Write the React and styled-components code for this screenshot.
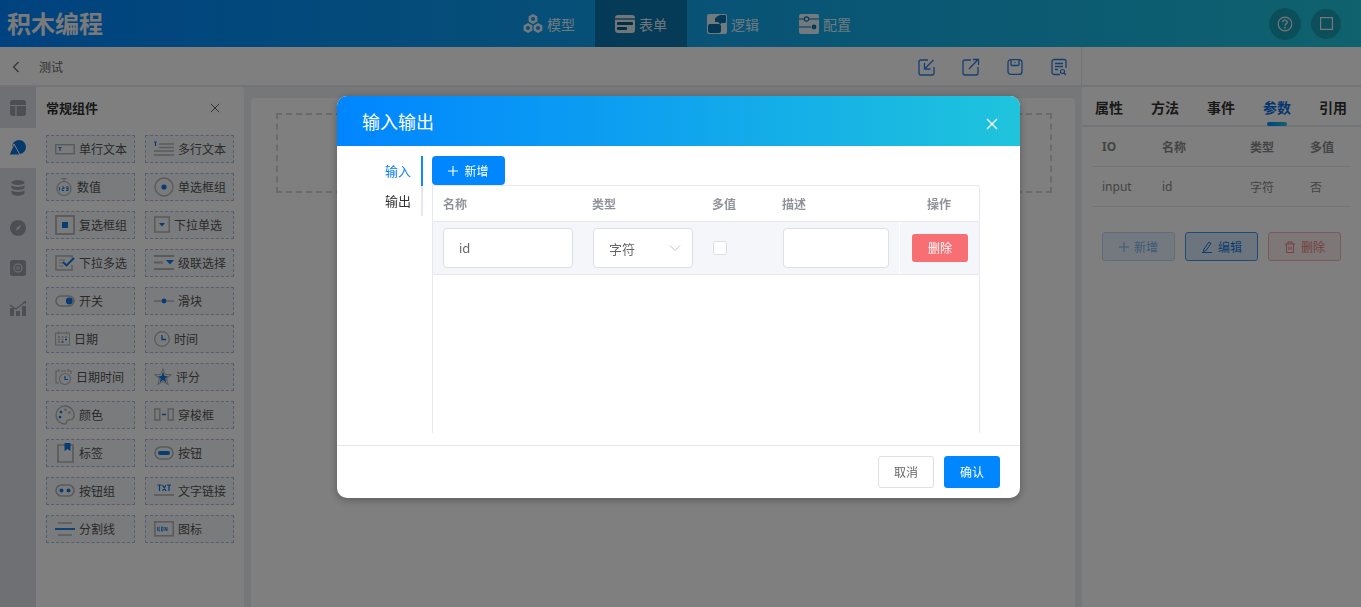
import React from "react";
import styled, { createGlobalStyle } from "styled-components";

const GlobalStyle = createGlobalStyle`
  html, body { margin: 0; padding: 0; height: 100%; overflow: hidden; }
  body { font-family: "Noto Sans", "Noto Sans CJK SC", sans-serif; font-size: 13px; color: #333; }
  * { box-sizing: border-box; }
`;

const BLUE = "#0a78e6";
const GREY = "#b4b4b4";

const Page = styled.div`
  height: 100vh;
  display: flex;
  flex-direction: column;
  background: #eceef3;
`;

const Header = styled.header`
  height: 47px;
  flex: none;
  display: grid;
  grid-template-columns: 503px 368px 1fr;
  background: linear-gradient(90deg, #0085ff, #1fc4dc);
  color: #fff;
`;
const Logo = styled.div`
  padding-left: 7px;
  line-height: 47px;
  font-size: 24px;
  font-weight: 700;
  color: #f4f4f4;
`;
const Nav = styled.nav`
  display: flex;
`;
const NavItem = styled.div`
  width: 92px;
  display: flex;
  align-items: center;
  justify-content: center;
  gap: 4px;
  font-size: 14px;
  color: #ffffffe0;
  background: ${(p) => (p.$active ? "rgba(0,0,0,.27)" : "transparent")};
`;
const HeaderRight = styled.div`
  display: flex;
  justify-content: flex-end;
  align-items: center;
  gap: 10px;
  padding-right: 20px;
`;
const Round = styled.div`
  width: ${(p) => p.$size}px;
  height: ${(p) => p.$size}px;
  border-radius: 50%;
  background: rgba(0, 0, 0, 0.18);
  display: flex;
  align-items: center;
  justify-content: center;
`;

const Toolbar = styled.div`
  height: 40px;
  flex: none;
  display: flex;
  background: #fff;
  border-bottom: 2px solid #e6e8ee;
`;
const ToolLeft = styled.div`
  width: 1082px;
  display: flex;
  align-items: center;
  padding: 2px 0 0 11px;
  border-right: 1px solid #e6e8ee;
  font-size: 12px;
  color: #666;
`;
const BackTitle = styled.span`
  margin-left: 18px;
`;
const ToolIcons = styled.div`
  margin-left: auto;
  display: flex;
  gap: 26px;
  padding-right: 13px;
`;

const Body = styled.div`
  flex: 1;
  display: flex;
  min-height: 0;
`;
const Rail = styled.div`
  width: 36px;
  flex: none;
  padding-top: 1px;
  background: #dfe1e8;
`;
const RailItem = styled.div`
  height: 40px;
  display: flex;
  align-items: center;
  justify-content: center;
  background: ${(p) => (p.$active ? "#fff" : "transparent")};
`;
const Panel = styled.div`
  width: 208px;
  flex: none;
  background: #fff;
  border-radius: 0 4px 0 0;
`;
const PanelHead = styled.div`
  height: 48px;
  display: flex;
  align-items: center;
  justify-content: space-between;
  padding: 0 24px 7px 10px;
  font-size: 13px;
  font-weight: 700;
  color: #333;
`;
const PaletteGrid = styled.div`
  display: grid;
  grid-template-columns: 89px 89px;
  grid-auto-rows: 28px;
  gap: 10px;
  padding-left: 10px;
`;
const PaletteItem = styled.div`
  display: flex;
  align-items: center;
  gap: 4px;
  padding-left: 8px;
  border: 1px dashed #a9bcdc;
  background: #f5f6fa;
  font-size: 12px;
  color: #555;
  white-space: nowrap;
`;

const CanvasWrap = styled.div`
  flex: 1;
  padding: 11px 7px 0;
`;
const CanvasCard = styled.div`
  height: 100%;
  background: #fff;
  border-radius: 4px 4px 0 0;
  padding: 15px 23px 0 25px;
`;
const DropZone = styled.div`
  height: 80px;
  border: 2px dashed #d4d4d4;
`;

const RightPanel = styled.aside`
  width: 279px;
  flex: none;
  background: #fff;
`;
const RightTabs = styled.div`
  height: 40px;
  display: flex;
  gap: 28px;
  padding: 9px 0 0 13px;
  border-bottom: 2px solid #e6e8ee;
`;
const RightTab = styled.div`
  position: relative;
  height: 29px;
  font-size: 14px;
  font-weight: 700;
  line-height: 23px;
  color: ${(p) => (p.$active ? "#0a6fe0" : "#333")};
  &::after {
    content: "";
    display: ${(p) => (p.$active ? "block" : "none")};
    position: absolute;
    left: 4px;
    bottom: -1px;
    width: 20px;
    height: 4px;
    border-radius: 2px;
    background: linear-gradient(90deg, #0085ff, #1fc4dc);
  }
`;
const ParamTable = styled.div`
  margin: 0 11px 0 10px;
  font-size: 12px;
  color: #888;
`;
const ParamRow = styled.div`
  height: 40px;
  display: grid;
  grid-template-columns: 60px 88px 60px 1fr;
  align-items: center;
  padding-left: 10px;
  border-bottom: 1px solid #e8eaf0;
  font-weight: ${(p) => (p.$head ? 700 : 400)};
`;
const ParamActions = styled.div`
  display: flex;
  gap: 10px;
  padding: 25px 0 0 10px;
`;
const ParamButton = styled.div`
  width: 73px;
  height: 29px;
  border-radius: 3px;
  display: flex;
  align-items: center;
  justify-content: center;
  gap: 5px;
  font-size: 12px;
  border: 1px solid ${(p) => p.$line};
  background: ${(p) => p.$bg};
  color: ${(p) => p.$color};
`;

const Overlay = styled.div`
  position: fixed;
  inset: 0;
  background: rgba(0, 0, 0, 0.5);
  padding: 96px 0 0 337px;
`;
const Dialog = styled.div`
  width: 683px;
  height: 402px;
  background: #fff;
  border-radius: 10px;
  overflow: hidden;
  display: flex;
  flex-direction: column;
  box-shadow: 0 2px 8px rgba(0, 0, 0, 0.3);
`;
const DialogHead = styled.div`
  height: 50px;
  flex: none;
  display: flex;
  align-items: center;
  justify-content: space-between;
  padding: 0 22px 0 25px;
  background: linear-gradient(90deg, #0085ff, #1fc4dc);
  color: #fff;
  font-size: 18px;
`;
const CloseIcon = styled.span`
  display: flex;
  margin-top: 6px;
`;
const DialogBody = styled.div`
  flex: 1;
  display: flex;
  padding: 10px 40px 12px 0;
  border-bottom: 1px solid #e4e6ef;
`;
const SideTabs = styled.div`
  width: 86px;
  flex: none;
  margin-right: 9px;
  align-self: flex-start;
  border-right: 2px solid #e4e6ef;
`;
const SideTab = styled.div`
  position: relative;
  height: 30px;
  line-height: 30px;
  padding-left: 48px;
  font-size: 13px;
  margin-right: -2px;
  border-right: 2px solid ${(p) => (p.$active ? "#0a8cff" : "transparent")};
  color: ${(p) => (p.$active ? "#0a7cff" : "#333")};
`;
const DialogMain = styled.div`
  flex: 1;
  display: flex;
  flex-direction: column;
  align-items: flex-start;
`;
const AddButton = styled.div`
  width: 73px;
  height: 29px;
  flex: none;
  display: flex;
  align-items: center;
  justify-content: center;
  gap: 6px;
  border-radius: 4px;
  background: #0087ff;
  color: #fff;
  font-size: 12px;
`;
const IoTable = styled.div`
  flex: 1;
  width: 100%;
  border: 1px solid #e8e9f0;
  border-bottom: none;
  border-radius: 0 4px 0 0;
`;
const IoHead = styled.div`
  height: 35px;
  display: grid;
  grid-template-columns: 149px 120px 70px 144px 1fr;
  align-items: center;
  padding-left: 10px;
  font-size: 12px;
  font-weight: 700;
  color: #909399;
`;
const HeadAction = styled.span`
  padding-left: 1px;
`;
const IoRow = styled.div`
  height: 54px;
  display: flex;
  align-items: center;
  padding-left: 10px;
  background: #f5f6fa;
  border-top: 1px solid #e8e9f0;
  border-bottom: 1px solid #e8e9f0;
`;
const Field = styled.div`
  width: ${(p) => p.$w}px;
  height: 40px;
  flex: none;
  margin-right: ${(p) => p.$mr || 0}px;
  display: flex;
  align-items: center;
  justify-content: space-between;
  padding: 0 11px 0 15px;
  background: #fff;
  border: 1px solid #dcdfe6;
  border-radius: 4px;
  font-size: 13px;
  color: #666;
`;
const Check = styled.div`
  width: 14px;
  height: 14px;
  flex: none;
  margin-right: 56px;
  background: #fff;
  border: 1px solid #dcdfe6;
  border-radius: 2px;
`;
const ActionCell = styled.div`
  align-self: stretch;
  margin-left: 10px;
  padding-left: 12px;
  display: flex;
  align-items: center;
  border-left: 1px solid #fff;
`;
const DeleteButton = styled.div`
  width: 56px;
  height: 28px;
  display: flex;
  align-items: center;
  justify-content: center;
  border-radius: 3px;
  background: #f76f72;
  color: #fff;
  font-size: 12px;
`;
const DialogFoot = styled.div`
  height: 52px;
  flex: none;
  display: flex;
  align-items: center;
  justify-content: flex-end;
  gap: 10px;
  padding: 0 20px 0 0;
`;
const FootButton = styled.div`
  width: 56px;
  height: 32px;
  display: flex;
  align-items: center;
  justify-content: center;
  border-radius: 3px;
  font-size: 12px;
  border: 1px solid ${(p) => (p.$primary ? "#0087ff" : "#dcdfe6")};
  background: ${(p) => (p.$primary ? "#0087ff" : "#fff")};
  color: ${(p) => (p.$primary ? "#fff" : "#666")};
`;

const Svg = ({ w = 20, h = 20, vb = "0 0 20 20", children, ...rest }) => (
  <svg width={w} height={h} viewBox={vb} fill="none" style={{ flex: "none" }} {...rest}>
    {children}
  </svg>
);

const Cross = ({ size = 12, color = "#fff", sw = 1.4 }) => (
  <Svg w={size} h={size} vb="0 0 12 12">
    <path d="M1 1l10 10M11 1L1 11" stroke={color} strokeWidth={sw} />
  </Svg>
);
const Plus = ({ color = "#fff", size = 10 }) => (
  <Svg w={size} h={size} vb="0 0 10 10">
    <path d="M5 0v10M0 5h10" stroke={color} strokeWidth="1.1" />
  </Svg>
);

const navHex = "#ffffffe0";
const navIcons = {
  model: (
    <Svg>
      {[[10, 5], [5, 14], [15, 14]].map(([x, y]) => (
        <path
          key={x + "-" + y}
          fillRule="evenodd"
          fill={navHex}
          d={`M${x} ${y - 5}l4.4 2.5v5L${x} ${y + 5}l-4.4-2.5v-5zM${x} ${y - 2}a2 2 0 100 4 2 2 0 000-4z`}
        />
      ))}
    </Svg>
  ),
  form: (
    <Svg>
      <rect y="1" width="20" height="18" rx="3" fill={navHex} />
      <path d="M0 5h20" stroke="#075a86" strokeWidth="1.2" />
      <rect x="2" y="8" width="16" height="3" rx="1" fill="#075a86" />
      <rect x="2" y="13" width="10" height="3" rx="1" fill="#075a86" />
    </Svg>
  ),
  logic: (
    <Svg>
      <rect y="0" width="20" height="20" rx="2" fill={navHex} />
      <rect x="1" y="10" width="13" height="9" rx="2" fill="#0a70a8" />
      <path d="M10 2.500l3-1.500h5a1 1 0 011 1v6a1 1 0 01-1 1h-3l-2 1-2-2H8V4.500z" fill="#0a70a8" />
    </Svg>
  ),
  config: (
    <Svg>
      <rect y="0" width="20" height="20" rx="2" fill={navHex} />
      <path d="M0 5h5M10 5h10M0 13h12" stroke="#0a70a8" strokeWidth="1.2" />
      <circle cx="7.5" cy="5" r="2.2" stroke="#0a70a8" strokeWidth="1.2" />
      <circle cx="15" cy="13" r="2.4" fill="#0a70a8" />
    </Svg>
  ),
};

const paletteIcons = {
  input: (
    <>
      <rect x="0.7" y="5.700" width="18.600" height="9" stroke={GREY} strokeWidth="1.400" />
      <path d="M3.500 8.500h3M5 8.500v3.500" stroke={BLUE} strokeWidth="1" />
    </>
  ),
  textarea: (
    <>
      <path d="M0 3h3M1.500 3v4" stroke={BLUE} strokeWidth="1.200" />
      <path d="M5 5h15M5 8.500h15M0 12h20M0 16h20" stroke={GREY} strokeWidth="1.600" />
    </>
  ),
  number: (
    <>
      <circle cx="9" cy="11.500" r="7" stroke={GREY} strokeWidth="1.200" />
      <path d="M6 1.500h6M9 1.500v3" stroke={GREY} strokeWidth="1.200" />
      <path d="M4.500 10v3.500M7 10h2v1.700H7v1.800h2M11 10h2.200v3.500H11M11 11.700h2" stroke={BLUE} strokeWidth=".9" />
    </>
  ),
  radio: (
    <>
      <circle cx="10" cy="10" r="9" stroke={GREY} strokeWidth="1.400" />
      <circle cx="10" cy="10" r="2.600" fill={BLUE} />
    </>
  ),
  checkbox: (
    <>
      <rect x="1" y="1" width="18" height="18" stroke={GREY} strokeWidth="1.800" />
      <rect x="7" y="7" width="6" height="6" fill={BLUE} />
    </>
  ),
  selectOne: (
    <>
      <rect x=".8" y="2" width="14.500" height="15" stroke={GREY} strokeWidth="1.500" />
      <path d="M5 8h6l-3 3.500z" fill={BLUE} />
    </>
  ),
  selectMany: (
    <>
      <path d="M17 5V3H1v14h16v-5" stroke={GREY} strokeWidth="1.500" />
      <path d="M4 7h6M4 10h4M4 13h4" stroke={GREY} strokeWidth="1.200" />
      <path d="M8 9l3.500 3.500L19 5" stroke={BLUE} strokeWidth="1.800" />
    </>
  ),
  cascade: (
    <>
      <path d="M0 3h20M0 9.500h9M0 16h20" stroke={GREY} strokeWidth="1.800" />
      <path d="M12 7h8l-4 4.500z" fill={BLUE} />
    </>
  ),
  toggle: (
    <>
      <rect x="1" y="5" width="18" height="10" rx="5" stroke={GREY} strokeWidth="1.600" />
      <circle cx="14.300" cy="10" r="3.400" fill={BLUE} />
    </>
  ),
  slider: (
    <>
      <path d="M0 10h20" stroke={GREY} strokeWidth="1.400" />
      <circle cx="10" cy="10" r="2.400" fill={BLUE} />
    </>
  ),
  date: (
    <>
      <rect x=".6" y="4" width="14" height="12" stroke={GREY} strokeWidth="1.100" />
      <path d="M3.500 2.500v3M11.500 2.500v3" stroke={GREY} strokeWidth="1.100" />
      <path d="M3 8h2M6.500 8h2M10 8h2M3 10.500h2M6.500 10.500h2M3 13h2" stroke={GREY} strokeWidth="1.400" />
      <path d="M10 10.500h2M6.500 13h2" stroke={BLUE} strokeWidth="1.400" />
    </>
  ),
  time: (
    <>
      <circle cx="8" cy="10" r="7.300" stroke={GREY} strokeWidth="1.300" />
      <path d="M8 6v4.500h4" stroke={BLUE} strokeWidth="1.300" />
    </>
  ),
  dateTime: (
    <>
      <path d="M4 4H1v12h3M13 4h3v3" stroke={GREY} strokeWidth="1.100" />
      <path d="M4 2v3M13 2v3M6 4h5" stroke={GREY} strokeWidth="1.100" />
      <circle cx="10" cy="12" r="5.500" stroke={GREY} strokeWidth="1.100" />
      <path d="M10 9v3.500h3" stroke={BLUE} strokeWidth="1.100" />
    </>
  ),
  star: (
    <>
      <path d="M9 2l2.200 5.400 5.800.4-4.400 3.800 1.400 5.700L9 14.300 4 17.300l1.400-5.700L1 7.800l5.800-.4z" stroke={GREY} strokeWidth="1.100" />
      <path d="M9 5l1.500 4 3.500.3-2.700 2.300.9 3.600L9 13z" fill={BLUE} />
      <path d="M9 5L7.500 9 4 9.300l2.700 2.300-.9 3.600L9 13z" fill={BLUE} />
    </>
  ),
  palette: (
    <>
      <path d="M10 1a9 9 0 100 18c2 0 1-2 2-3.500s6 1 7-4C19.800 6 15.500 1 10 1z" stroke={GREY} strokeWidth="1.300" />
      <circle cx="6" cy="7" r="1.300" fill={BLUE} />
      <circle cx="10.500" cy="4.800" r="1.300" fill={GREY} />
      <circle cx="14.500" cy="7.500" r="1.300" fill={GREY} />
      <circle cx="5" cy="12" r="1.300" fill={BLUE} />
    </>
  ),
  transfer: (
    <>
      <rect x=".8" y="4" width="5" height="11" stroke={GREY} strokeWidth="1.500" />
      <rect x="14.200" y="4" width="5" height="11" stroke={GREY} strokeWidth="1.500" />
      <path d="M8 9.500h4" stroke={BLUE} strokeWidth="1.500" />
    </>
  ),
  tag: (
    <>
      <path d="M3 2v17h15V2z" stroke={GREY} strokeWidth="1.700" />
      <path d="M9.500 0h6v8l-3-2-3 2z" fill={BLUE} />
    </>
  ),
  button: (
    <>
      <rect x="1" y="4" width="18" height="12" rx="6" stroke={GREY} strokeWidth="1.600" />
      <rect x="4" y="8" width="12" height="4" rx="2" fill={BLUE} />
    </>
  ),
  buttons: (
    <>
      <rect x="1" y="4" width="18" height="11" rx="5.500" stroke={GREY} strokeWidth="1.600" />
      <circle cx="6.500" cy="9.500" r="2" fill={BLUE} />
      <circle cx="13.500" cy="9.500" r="2" fill={BLUE} />
    </>
  ),
  link: (
    <>
      <path d="M3.500 4h4M5.500 4v6M8.500 4l3.500 6M12 4l-3.500 6M13 4h4M15 4v6" stroke={BLUE} strokeWidth="1.200" />
      <path d="M0 14h20" stroke={GREY} strokeWidth="1.600" />
    </>
  ),
  divider: (
    <>
      <path d="M3 4h14M3 16h14" stroke={GREY} strokeWidth="1.600" />
      <path d="M0 10h20" stroke={BLUE} strokeWidth="1.800" />
    </>
  ),
  iconBox: (
    <>
      <rect x=".8" y="2.800" width="18.400" height="14" stroke={GREY} strokeWidth="1.600" />
      <path d="M3.500 8v4M5.800 8H5v4h1M7.500 8h1.500v4H7.500zM11 12V8l2 4V8" stroke={BLUE} strokeWidth=".8" />
    </>
  ),
};

const palette = [
  ["input", "单行文本"],
  ["textarea", "多行文本"],
  ["number", "数值", 18],
  ["radio", "单选框组"],
  ["checkbox", "复选框组"],
  ["selectOne", "下拉单选", 16],
  ["selectMany", "下拉多选"],
  ["cascade", "级联选择"],
  ["toggle", "开关"],
  ["slider", "滑块"],
  ["date", "日期", 15],
  ["time", "时间", 16],
  ["dateTime", "日期时间", 17],
  ["star", "评分", 18],
  ["palette", "颜色"],
  ["transfer", "穿梭框"],
  ["tag", "标签"],
  ["button", "按钮"],
  ["buttons", "按钮组"],
  ["link", "文字链接"],
  ["divider", "分割线"],
  ["iconBox", "图标"],
];

const railIcons = [
  <Svg key="0">
    <rect x="2" y="2" width="16" height="16" rx="3" fill="#9a9ca6" />
    <path d="M2 7.500h16M8 7.500V18" stroke="#dfe1e8" strokeWidth="1.200" />
  </Svg>,
  <Svg key="1">
    <circle cx="11" cy="9" r="7" fill="#0a72d8" />
    <path d="M6 6l6 11H1z" fill="#0a72d8" stroke="#fff" strokeWidth="1" />
  </Svg>,
  <Svg key="2">
    <ellipse cx="10" cy="4.500" rx="6.500" ry="2.500" fill="#9a9ca6" />
    <path d="M3.500 7c1 2.500 12 2.500 13 0v3c-1 2.500-12 2.500-13 0zM3.500 12c1 2.500 12 2.500 13 0v3c-1 3.500-12 3.500-13 0z" fill="#9a9ca6" />
  </Svg>,
  <Svg key="3">
    <circle cx="10" cy="10" r="8" fill="#9a9ca6" />
    <path d="M13.500 6.500L11 11l-3 1.500 1-3z" fill="#dfe1e8" />
  </Svg>,
  <Svg key="4">
    <rect x="2" y="2" width="16" height="16" rx="2.500" fill="#9a9ca6" />
    <circle cx="10" cy="10" r="4" stroke="#dfe1e8" strokeWidth="1.100" />
    <circle cx="10" cy="10" r="1.300" stroke="#dfe1e8" strokeWidth=".8" />
  </Svg>,
  <Svg key="5">
    <path d="M2 10h4v8H2zM8 13h4v5H8zM14 8h4v10h-4z" fill="#9a9ca6" />
    <path d="M2 7l6 4 9-7" stroke="#9a9ca6" strokeWidth="1.300" />
    <path d="M18 2.500V6l-3.500-1.500z" fill="#9a9ca6" />
  </Svg>,
];

const toolIcons = [
  <Svg key="a" w={18} h={18} vb="0 0 18 18">
    <path d="M10 2H3a2 2 0 00-2 2v11a2 2 0 002 2h11a2 2 0 002-2V9" stroke="#2a7fe0" strokeWidth="1.300" />
    <path d="M15.500 2L7.500 10M6.500 5v6h6" stroke="#2a7fe0" strokeWidth="1.300" />
  </Svg>,
  <Svg key="b" w={18} h={18} vb="0 0 18 18">
    <path d="M9 2H3a2 2 0 00-2 2v11a2 2 0 002 2h11a2 2 0 002-2V9" stroke="#2a7fe0" strokeWidth="1.300" />
    <path d="M7 11l9-9.500M11 1.500h5.500V7" stroke="#2a7fe0" strokeWidth="1.300" />
  </Svg>,
  <Svg key="c" w={18} h={18} vb="0 0 18 18">
    <rect x="2" y="1.600" width="14" height="14.800" rx="3" stroke="#2a7fe0" strokeWidth="1.300" />
    <path d="M5 2v4.500a1 1 0 001 1h6a1 1 0 001-1V2" stroke="#2a7fe0" strokeWidth="1.300" />
    <path d="M9 4v1" stroke="#2a7fe0" strokeWidth="1.300" />
  </Svg>,
  <Svg key="d" w={18} h={18} vb="0 0 18 18">
    <path d="M10 16.500H4a2 2 0 01-2-2v-11a2 2 0 012-2h10a2 2 0 012 2V10" stroke="#2a7fe0" strokeWidth="1.300" />
    <path d="M5 5.500h8M5 8.500h8M5 11.500h3" stroke="#2a7fe0" strokeWidth="1.300" />
    <circle cx="12.500" cy="13.500" r="2" stroke="#2a7fe0" strokeWidth="1.200" />
    <path d="M14 15l2 2" stroke="#2a7fe0" strokeWidth="1.200" />
  </Svg>,
];

export default function App() {
  return (
    <Page>
      <GlobalStyle />
      <Header>
        <Logo>积木编程</Logo>
        <Nav>
          <NavItem>{navIcons.model}模型</NavItem>
          <NavItem $active>{navIcons.form}表单</NavItem>
          <NavItem>{navIcons.logic}逻辑</NavItem>
          <NavItem>{navIcons.config}配置</NavItem>
        </Nav>
        <HeaderRight>
          <Round $size={32}>
            <Svg w={16} h={16} vb="0 0 16 16">
              <circle cx="8" cy="8" r="6.800" stroke="#eee" strokeWidth="1.200" />
              <path d="M5.800 6.200a2.200 2.200 0 114 1.200c-.6.800-1.800 1-1.800 2.300" stroke="#eee" strokeWidth="1.300" />
              <circle cx="8" cy="11.700" r=".9" fill="#eee" />
            </Svg>
          </Round>
          <Round $size={30}>
            <Svg w={13} h={13} vb="0 0 13 13">
              <rect x=".6" y=".6" width="11.800" height="11.800" stroke="#eee" strokeWidth="1.200" />
            </Svg>
          </Round>
        </HeaderRight>
      </Header>

      <Toolbar>
        <ToolLeft>
          <Svg w={10} h={12} vb="0 0 10 12">
            <path d="M7.500 1L2.500 6l5 5" stroke="#666" strokeWidth="1.200" />
          </Svg>
          <BackTitle>测试</BackTitle>
          <ToolIcons>{toolIcons}</ToolIcons>
        </ToolLeft>
      </Toolbar>

      <Body>
        <Rail>
          {railIcons.map((icon, i) => (
            <RailItem key={i} $active={i === 1}>
              {icon}
            </RailItem>
          ))}
        </Rail>
        <Panel>
          <PanelHead>
            常规组件
            <Cross size={10} color="#555" sw={1.1} />
          </PanelHead>
          <PaletteGrid>
            {palette.map(([icon, label, w = 20]) => (
              <PaletteItem key={label}>
                <Svg w={w} h={20} vb={`0 0 ${w} 20`}>
                  {paletteIcons[icon]}
                </Svg>
                {label}
              </PaletteItem>
            ))}
          </PaletteGrid>
        </Panel>
        <CanvasWrap>
          <CanvasCard>
            <DropZone />
          </CanvasCard>
        </CanvasWrap>
        <RightPanel>
          <RightTabs>
            <RightTab>属性</RightTab>
            <RightTab>方法</RightTab>
            <RightTab>事件</RightTab>
            <RightTab $active>参数</RightTab>
            <RightTab>引用</RightTab>
          </RightTabs>
          <ParamTable>
            <ParamRow $head>
              <span>IO</span>
              <span>名称</span>
              <span>类型</span>
              <span>多值</span>
            </ParamRow>
            <ParamRow>
              <span>input</span>
              <span>id</span>
              <span>字符</span>
              <span>否</span>
            </ParamRow>
            <ParamActions>
              <ParamButton $line="#bcd9f7" $bg="#e8f3fe" $color="#7ab4f0">
                <Plus color="#7ab4f0" />
                新增
              </ParamButton>
              <ParamButton $line="#3f95f0" $bg="#d9eafc" $color="#1a78e0">
                <Svg w={12} h={12} vb="0 0 12 12">
                  <path d="M3 8l5-7 2 1.500-5 7-2.500 1zM1 11.500h10" stroke="#1a78e0" strokeWidth="1" />
                </Svg>
                编辑
              </ParamButton>
              <ParamButton $line="#f5b5b5" $bg="#fdeeee" $color="#ea8080">
                <Svg w={12} h={12} vb="0 0 12 12">
                  <path d="M1 3h10M4 3V1h4v2M2.500 3v8.500h7V3M5 5.500v3.500M7 5.500v3.500" stroke="#ea8080" strokeWidth="1" />
                </Svg>
                删除
              </ParamButton>
            </ParamActions>
          </ParamTable>
        </RightPanel>
      </Body>

      <Overlay>
        <Dialog>
          <DialogHead>
            输入输出
            <CloseIcon>
              <Cross size={12} sw={1.300} />
            </CloseIcon>
          </DialogHead>
          <DialogBody>
            <SideTabs>
              <SideTab $active>输入</SideTab>
              <SideTab>输出</SideTab>
            </SideTabs>
            <DialogMain>
              <AddButton>
                <Plus />
                新增
              </AddButton>
              <IoTable>
                <IoHead>
                  <span>名称</span>
                  <span>类型</span>
                  <span>多值</span>
                  <span>描述</span>
                  <HeadAction>操作</HeadAction>
                </IoHead>
                <IoRow>
                  <Field $w={130} $mr={20}>id</Field>
                  <Field $w={100} $mr={20}>
                    字符
                    <Svg w={12} h={8} vb="0 0 12 8">
                      <path d="M1 1.500l5 5 5-5" stroke="#c0c4cc" strokeWidth="1" />
                    </Svg>
                  </Field>
                  <Check />
                  <Field $w={106} />
                  <ActionCell>
                    <DeleteButton>删除</DeleteButton>
                  </ActionCell>
                </IoRow>
              </IoTable>
            </DialogMain>
          </DialogBody>
          <DialogFoot>
            <FootButton>取消</FootButton>
            <FootButton $primary>确认</FootButton>
          </DialogFoot>
        </Dialog>
      </Overlay>
    </Page>
  );
}
